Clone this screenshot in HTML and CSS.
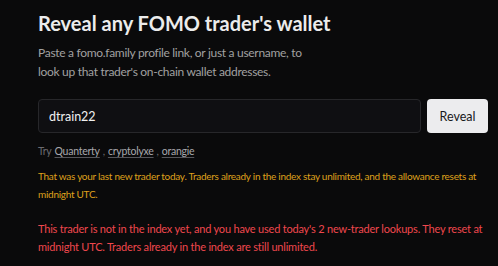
FILE: index.html
```html
<!DOCTYPE html>
<html lang="en">

<head>
    <meta charset="UTF-8">
    <meta name="viewport" content="width=device-width, initial-scale=1.0">
    <title>Reveal wallet</title>
    <link rel="stylesheet" href="styles.css">
</head>

<body>
    <div class="page">
        <h1 class="title">Reveal any FOMO trader's wallet</h1>
        <p class="lead">Paste a fomo.family profile link, or just a username, to look up that trader's on-chain wallet addresses.</p>

        <form class="search" onsubmit="return false">
            <input class="field" type="text" value="dtrain22">
            <button class="btn" type="submit">Reveal</button>
        </form>

        <div class="try">
            <span>Try</span>
            <a href="#">Quanterty</a><span>,</span>
            <a href="#">cryptolyxe</a><span>,</span>
            <a href="#">orangie</a>
        </div>

        <p class="note warn">That was your last new trader today. Traders already in the index stay unlimited, and the allowance resets at midnight UTC.</p>

        <p class="note error">This trader is not in the index yet, and you have used today's 2 new-trader lookups. They reset at midnight UTC. Traders already in the index are still unlimited.</p>
    </div>
</body>

</html>
```

FILE: styles.css
```css
body {
    margin: 0;
    background-color: #0a0a0b;
    font-family: "Lato", "Open Sans", sans-serif;
    color: #ededed;
}

.page {
    width: 450px;
    padding: 9px 0 0 38px;
}

.title {
    margin: 0;
    font-size: 20px;
    line-height: 28px;
    font-weight: 700;
    color: #ececec;
}

.lead {
    max-width: 285px;
    margin: 6px 0 0;
    font-size: 12px;
    letter-spacing: -0.3px;
    line-height: 19px;
    color: #a1a1a1;
}

.search {
    display: flex;
    gap: 6px;
    margin-top: 18px;
}

.field {
    flex: 1;
    height: 34px;
    box-sizing: border-box;
    padding: 0 10px;
    background-color: #0f0f12;
    border: 1px solid #27272a;
    border-radius: 4px;
    color: #f0f0f0;
    font-family: inherit;
    font-size: 12.5px;
    outline: none;
}

.btn {
    width: 61px;
    height: 34px;
    border: none;
    border-radius: 4px;
    background-color: #ececee;
    color: #18181b;
    font-family: inherit;
    font-size: 12.5px;
    cursor: pointer;
}

.try {
    display: flex;
    gap: 3px;
    margin-top: 10px;
    font-size: 10.5px;
    letter-spacing: -0.25px;
    line-height: 16px;
    color: #6b6b70;
}

.try a {
    color: #a8a8ad;
    text-decoration: underline;
    text-decoration-color: #55555a;
    text-underline-offset: 2px;
}

.note {
    margin: 0;
    line-height: 18px;
}

.warn {
    margin-top: 8px;
    font-size: 10px;
    letter-spacing: -0.28px;
    color: #dfa01c;
}

.error {
    margin-top: 17px;
    font-size: 11px;
    letter-spacing: -0.2px;
    color: #ef474d;
}
```
